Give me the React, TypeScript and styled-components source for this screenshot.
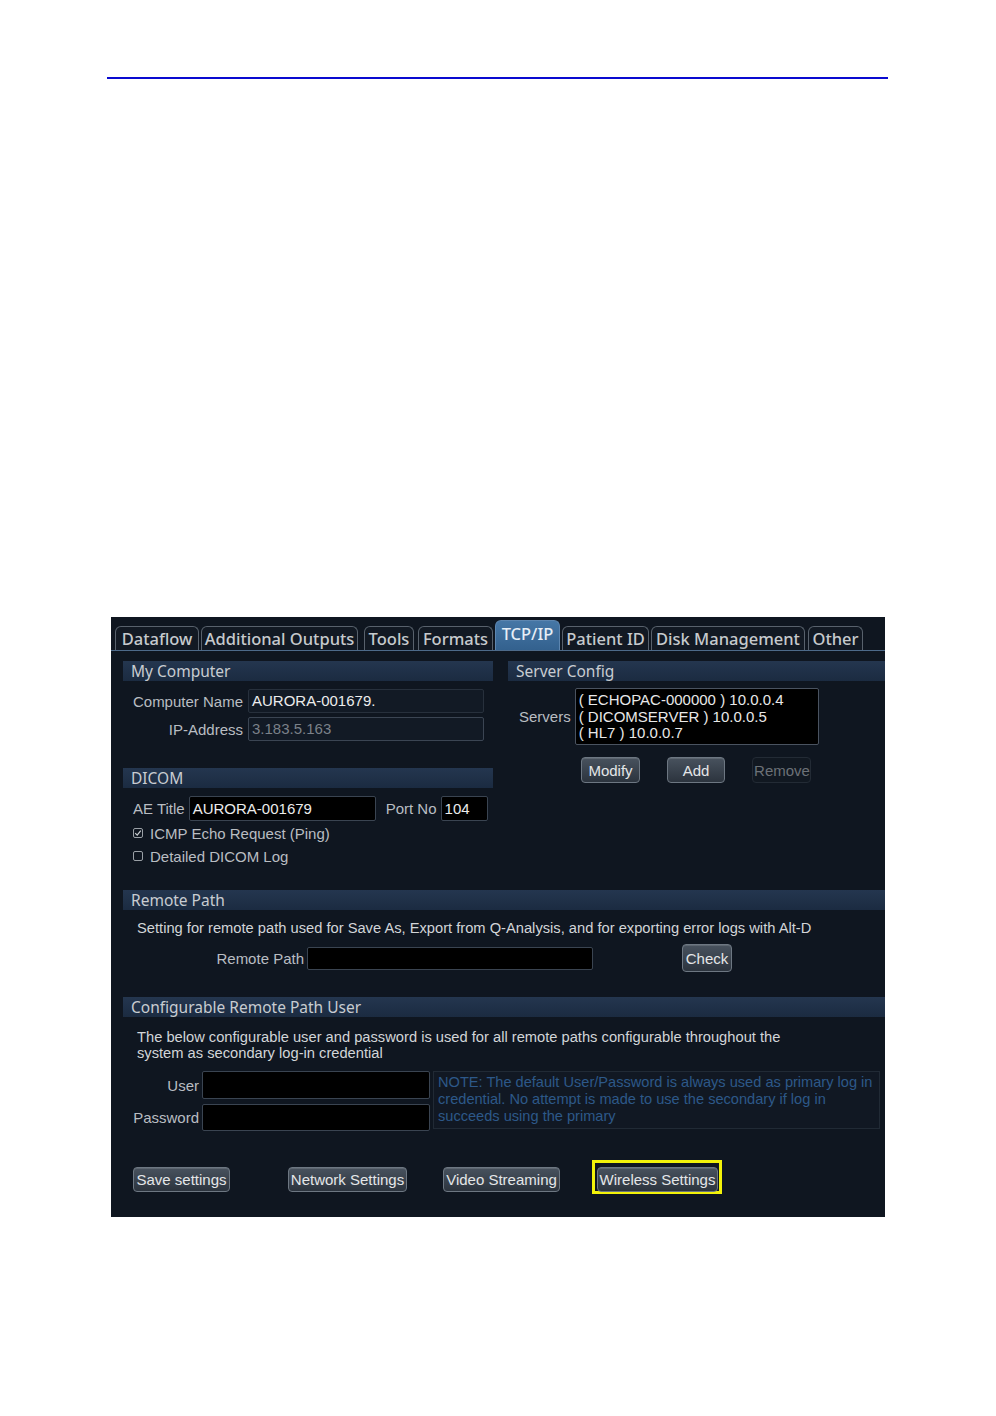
import React from "react";
import styled, { createGlobalStyle, css } from "styled-components";

const GlobalStyle = createGlobalStyle`
  html, body {
    margin: 0;
    padding: 0;
    background: #ffffff;
  }
  * {
    box-sizing: border-box;
  }
`;

const ui = `"Liberation Sans", Arial, sans-serif`;
const rounded = `"Noto Sans", "Open Sans", sans-serif`;

const Page = styled.div`
  width: 996px;
  height: 1416px;
  padding-top: 77px;
  background: #ffffff;
`;

const Rule = styled.div`
  margin-left: 107px;
  width: 781px;
  height: 2px;
  background: #0a0ad0;
`;

const Screen = styled.div`
  margin: 538px 0 0 111px;
  width: 774px;
  height: 600px;
  background: #0f1620;
  display: flex;
  flex-direction: column;
  font-family: ${ui};
  color: #babec3;
  overflow: hidden;
`;

/* ---------- tabs ---------- */

const TabBar = styled.div`
  height: 34px;
  display: flex;
  align-items: flex-end;
  gap: 2px;
  padding-left: 4px;
  border-bottom: 1px solid #4d6a8a;
`;

const Tab = styled.div<{ $w: number; $active?: boolean; $ml?: number }>`
  width: ${(p) => p.$w}px;
  margin-left: ${(p) => p.$ml ?? 0}px;
  height: 24px;
  border: 1px solid #58616c;
  border-bottom: none;
  border-radius: 6px 6px 0 0;
  background: #121923;
  color: #c6cacd;
  font-family: ${rounded};
  font-size: 16.5px;
  font-weight: 500;
  line-height: 24px;
  text-align: center;
  white-space: nowrap;
  ${(p) =>
    p.$active &&
    css`
      height: 30px;
      line-height: 26px;
      border-color: #5d86b0;
      background: linear-gradient(#4677a6, #33618e);
      color: #e6eef6;
    `}
`;

/* ---------- shared pieces ---------- */

const SectionHeader = styled.div`
  height: 20px;
  padding-left: 8px;
  background: linear-gradient(#24364f, #1b2b41);
  color: #c8ccd1;
  font-family: ${rounded};
  font-size: 15.5px;
  line-height: 20px;
  white-space: nowrap;
`;

const Label = styled.span<{ $w?: number; $ml?: number }>`
  ${(p) => p.$w !== undefined && css`width: ${p.$w}px;`}
  margin-left: ${(p) => p.$ml ?? 0}px;
  flex: none;
  text-align: right;
  font-size: 15px;
  color: #b9bdc2;
  white-space: nowrap;
`;

const Input = styled.div<{ $w: number; $h?: number; $kind?: "plain" | "dim" | "black" }>`
  width: ${(p) => p.$w}px;
  height: ${(p) => p.$h ?? 24}px;
  flex: none;
  padding: 0 3px;
  font-size: 15px;
  line-height: ${(p) => (p.$h ?? 24) - 2}px;
  color: #ececec;
  white-space: nowrap;
  border-radius: 2px;
  ${(p) =>
    p.$kind === "black"
      ? css`
          background: #000;
          border: 1px solid #3a4451;
        `
      : p.$kind === "dim"
      ? css`
          background: #121a25;
          border: 1px solid #3b4553;
          color: #7b8189;
        `
      : css`
          background: #121a25;
          border: 1px solid #27303c;
        `}
`;

const Button = styled.div<{ $w: number; $h?: number; $disabled?: boolean; $ml?: number }>`
  width: ${(p) => p.$w}px;
  height: ${(p) => p.$h ?? 26}px;
  margin-left: ${(p) => p.$ml ?? 0}px;
  flex: none;
  display: flex;
  align-items: center;
  justify-content: center;
  font-size: 15px;
  white-space: nowrap;
  overflow: hidden;
  border-radius: 4px;
  border: 1px solid #6d7782;
  background: linear-gradient(#48525e, #2c343e);
  color: #e4e6e8;
  box-shadow: inset 0 1px 0 rgba(255, 255, 255, 0.12);
  ${(p) =>
    p.$disabled &&
    css`
      padding-left: 1px;
      border-color: #232b35;
      background: #111821;
      color: #6c7177;
      box-shadow: none;
    `}
`;

/* ---------- upper two columns ---------- */

const Upper = styled.div`
  height: 239px;
  display: grid;
  grid-template-columns: 382px 1fr;
  column-gap: 15px;
  padding-top: 10px;
`;

const LeftCol = styled.div`
  padding-left: 12px;
  display: flex;
  flex-direction: column;
`;

const RightCol = styled.div`
  display: flex;
  flex-direction: column;
`;

const FieldRows = styled.div<{ $top: number; $gap: number }>`
  margin-top: ${(p) => p.$top}px;
  display: flex;
  flex-direction: column;
  gap: ${(p) => p.$gap}px;
`;

const Row = styled.div<{ $gap?: number; $pl?: number; $top?: number }>`
  display: flex;
  align-items: center;
  gap: ${(p) => p.$gap ?? 5}px;
  padding-left: ${(p) => p.$pl ?? 0}px;
  margin-top: ${(p) => p.$top ?? 0}px;
`;

const CheckRow = styled.div`
  height: 22px;
  display: flex;
  align-items: center;
  gap: 7px;
  padding-left: 10px;
  font-size: 15px;
  color: #b9bdc2;
`;

const Box = styled.span`
  width: 10px;
  height: 10px;
  border: 1px solid #9aa0a6;
  border-radius: 2px;
  display: flex;
  align-items: center;
  justify-content: center;
`;

const ServerList = styled.div`
  width: 244px;
  height: 57px;
  background: #000;
  border: 1px solid #4a5360;
  border-radius: 2px;
  padding: 3px 3px 2px;
  font-size: 15px;
  line-height: 16.5px;
  color: #e8e8e8;
  white-space: nowrap;
`;

const ServerButtons = styled.div`
  margin-top: 12px;
  padding-left: 73px;
  display: flex;
  gap: 27px;
`;

/* ---------- full width sections ---------- */

const Full = styled.div<{ $top?: number }>`
  padding-left: 12px;
  margin-top: ${(p) => p.$top ?? 0}px;
  display: flex;
  flex-direction: column;
`;

const Para = styled.div<{ $top: number }>`
  margin-top: ${(p) => p.$top}px;
  padding-left: 14px;
  font-size: 14.7px;
  line-height: 16px;
  color: #d2d5d8;
  white-space: nowrap;
`;

const UserGrid = styled.div`
  margin-top: 10px;
  display: grid;
  grid-template-columns: 76px 228px 447px;
  grid-template-rows: 28px 27px;
  column-gap: 3px;
  row-gap: 5px;
  align-items: center;
`;

const Note = styled.div`
  grid-column: 3;
  grid-row: 1 / span 2;
  height: 58px;
  align-self: start;
  border: 1px solid #212a35;
  background: #111823;
  padding: 2px 4px;
  font-size: 14.6px;
  line-height: 17px;
  color: #2d5889;
`;

const ButtonBar = styled.div`
  margin-top: 29px;
  padding-left: 22px;
  display: flex;
  align-items: flex-start;
  padding-top: 7px;
`;

const Highlight = styled.div<{ $ml: number }>`
  margin-left: ${(p) => p.$ml}px;
  margin-top: -7px;
  border: 3px solid #f2f20a;
  padding: 4px 1px 0 2px;
  height: 34px;
`;

const tabs = [
  { label: "Dataflow", w: 84 },
  { label: "Additional Outputs", w: 157 },
  { label: "Tools", w: 50, ml: 4 },
  { label: "Formats", w: 75, ml: 2 },
  { label: "TCP/IP", w: 65, active: true },
  { label: "Patient ID", w: 87 },
  { label: "Disk Management", w: 154 },
  { label: "Other", w: 55, ml: 1 },
];

function Check({ on }: { on?: boolean }) {
  return (
    <Box>
      {on && (
        <svg width="8" height="8" viewBox="0 0 8 8">
          <path d="M1.2 4.2 L3.2 6.2 L6.8 1.6" fill="none" stroke="#c9cdd1" strokeWidth="1.2" />
        </svg>
      )}
    </Box>
  );
}

export default function App() {
  return (
    <Page>
      <GlobalStyle />
      <Rule />
      <Screen>
        <TabBar>
          {tabs.map((t) => (
            <Tab key={t.label} $w={t.w} $ml={t.ml} $active={t.active}>
              {t.label}
            </Tab>
          ))}
        </TabBar>

        <Upper>
          <LeftCol>
            <SectionHeader>My Computer</SectionHeader>
            <FieldRows $top={8} $gap={4}>
              <Row>
                <Label $w={120}>Computer Name</Label>
                <Input $w={236}>AURORA-001679.</Input>
              </Row>
              <Row>
                <Label $w={120}>IP-Address</Label>
                <Input $w={236} $kind="dim">
                  3.183.5.163
                </Input>
              </Row>
            </FieldRows>

            <FieldRows $top={27} $gap={2}>
              <SectionHeader>DICOM</SectionHeader>
            </FieldRows>
            <FieldRows $top={8} $gap={1}>
              <Row $gap={4} $pl={10}>
                <Label>AE Title</Label>
                <Input $w={187} $h={25} $kind="black">
                  AURORA-001679
                </Input>
                <Label $ml={6}>Port No</Label>
                <Input $w={47} $h={25} $kind="black">
                  104
                </Input>
              </Row>
              <CheckRow>
                <Check on />
                ICMP Echo Request (Ping)
              </CheckRow>
              <CheckRow>
                <Check />
                Detailed DICOM Log
              </CheckRow>
            </FieldRows>
          </LeftCol>

          <RightCol>
            <SectionHeader>Server Config</SectionHeader>
            <FieldRows $top={7} $gap={0}>
              <Row $gap={4} $pl={11}>
                <Label>Servers</Label>
                <ServerList>
                  <div>( ECHOPAC-000000 ) 10.0.0.4</div>
                  <div>( DICOMSERVER ) 10.0.0.5</div>
                  <div>( HL7 ) 10.0.0.7</div>
                </ServerList>
              </Row>
            </FieldRows>
            <ServerButtons>
              <Button $w={59}>Modify</Button>
              <Button $w={58}>Add</Button>
              <Button $w={59} $disabled>
                Remove
              </Button>
            </ServerButtons>
          </RightCol>
        </Upper>

        <Full>
          <SectionHeader>Remote Path</SectionHeader>
          <Para $top={10}>
            Setting for remote path used for Save As, Export from Q-Analysis, and for exporting error logs with Alt-D
          </Para>
          <Row $gap={3} $top={8}>
            <Label $w={181}>Remote Path</Label>
            <Input $w={286} $h={23} $kind="black" />
            <Button $w={50} $h={28} $ml={86}>
              Check
            </Button>
          </Row>
        </Full>

        <Full $top={25}>
          <SectionHeader>Configurable Remote Path User</SectionHeader>
          <Para $top={12}>
            The below configurable user and password is used for all remote paths configurable throughout the
            <br />
            system as secondary log-in credential
          </Para>
          <UserGrid>
            <Label>User</Label>
            <Input $w={228} $h={28} $kind="black" />
            <Note>
              NOTE: The default User/Password is always used as primary log in credential. No attempt is made to use
              the secondary if log in succeeds using the primary
            </Note>
            <Label>Password</Label>
            <Input $w={228} $h={27} $kind="black" />
          </UserGrid>
        </Full>

        <ButtonBar>
          <Button $w={97} $h={25}>
            Save settings
          </Button>
          <Button $w={119} $h={25} $ml={58}>
            Network Settings
          </Button>
          <Button $w={117} $h={25} $ml={36}>
            Video Streaming
          </Button>
          <Highlight $ml={32}>
            <Button $w={121} $h={25}>
              Wireless Settings
            </Button>
          </Highlight>
        </ButtonBar>
      </Screen>
    </Page>
  );
}
